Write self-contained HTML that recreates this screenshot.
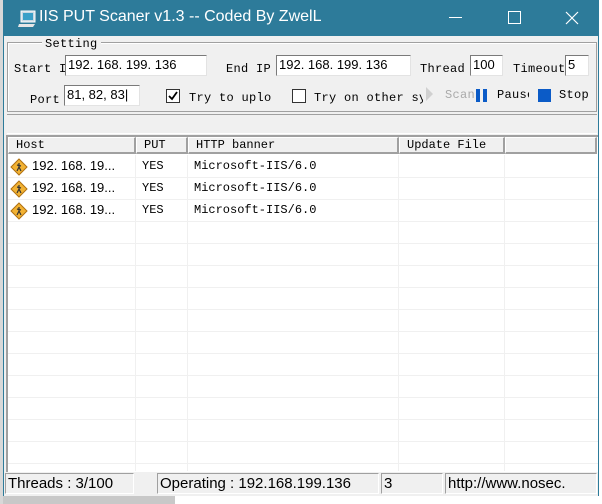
<!DOCTYPE html>
<html><head><meta charset="utf-8"><style>
*{margin:0;padding:0;box-sizing:border-box}
body{width:602px;height:504px;position:relative;overflow:hidden;background:#fff;font-family:"Liberation Mono",monospace;font-size:12px;color:#000}
.a{position:absolute}
.title{left:3px;top:0;width:596px;height:36px;background:#2d7b9a;color:#fff;font-family:"Liberation Sans",sans-serif;font-size:16px}
.win{left:3px;top:36px;width:596px;height:460px;background:#f0f0f0;border-right:1px solid #2d7b9a;border-left:1px solid #2d7b9a}
.inp{background:#fff;border-top:1px solid #7a7a7a;border-left:1px solid #7a7a7a;border-bottom:1px solid #e3e3e3;border-right:1px solid #e3e3e3;font-family:"Liberation Sans",sans-serif;font-size:13px;padding-left:2px;line-height:18px;height:21px}
.lbl{font-size:12px;line-height:14px;letter-spacing:0.3px}
.hd{top:137px;height:17px;background:#f0f0f0;border-right:2px solid #a0a0a0;border-bottom:2px solid #a0a0a0;border-left:1px solid #fff;border-top:1px solid #fff;font-size:12px;line-height:14px;padding-left:7px}
.cell{font-size:12px;line-height:22px}
.sb{top:473px;height:21px;border-top:1px solid #a0a0a0;border-left:1px solid #a0a0a0;border-bottom:1px solid #fff;border-right:1px solid #fff;font-family:"Liberation Sans",sans-serif;font-size:15px;line-height:19px;padding-left:2px;white-space:nowrap;overflow:hidden}
</style></head><body>
<div class="a" style="left:0;top:0;width:3px;height:504px;background:#d8d8d8"></div>
<div class="a title">
 <svg class="a" style="left:15px;top:10px" width="20" height="18"><rect x="3" y="1" width="14" height="11" fill="#c9d9e3" stroke="#fff"/><rect x="5" y="3" width="10" height="7" fill="#3aa0c8"/><path d="M1 14h16l-2 3H0z" fill="#e6e6e6"/></svg>
 <div class="a" style="left:36px;top:8px">IIS PUT Scaner v1.3 -- Coded By ZwelL</div>
 <div class="a" style="left:446px;top:17px;width:13px;height:1px;background:#fff"></div>
 <div class="a" style="left:505px;top:11px;width:13px;height:13px;border:1px solid #fff"></div>
 <svg class="a" style="left:562px;top:11px" width="14" height="14"><path d="M1 1L13 13M13 1L1 13" stroke="#fff" stroke-width="1.2"/></svg>
</div>
<div class="a win"></div>
<div class="a" style="left:7px;top:42px;width:590px;height:70px;border:1px solid #a0a0a0;box-shadow:inset 1px 1px #fff"></div>
<div class="a lbl" style="left:42px;top:37px;background:#f0f0f0;padding:0 3px">Setting</div>
<div class="a lbl" style="left:14px;top:62px">Start I</div>
<div class="a inp" style="left:65px;top:55px;width:142px">192. 168. 199. 136</div>
<div class="a lbl" style="left:226px;top:62px">End IP</div>
<div class="a inp" style="left:276px;top:55px;width:135px">192. 168. 199. 136</div>
<div class="a lbl" style="left:420px;top:62px">Thread</div>
<div class="a inp" style="left:470px;top:55px;width:33px">100</div>
<div class="a lbl" style="left:513px;top:62px">Timeout</div>
<div class="a inp" style="left:565px;top:55px;width:24px">5</div>
<div class="a lbl" style="left:30px;top:93px">Port</div>
<div class="a inp" style="left:64px;top:85px;width:76px">81, 82, 83|</div>
<div class="a" style="left:166px;top:89px;width:14px;height:14px;background:#fff;border:1px solid #333"></div>
<svg class="a" style="left:168px;top:91px" width="10" height="10"><path d="M1 5l3 3 5-7" stroke="#000" stroke-width="1.8" fill="none"/></svg>
<div class="a lbl" style="left:189px;top:91px">Try to uplo</div>
<div class="a" style="left:292px;top:89px;width:14px;height:14px;background:#fff;border:1px solid #333"></div>
<div class="a lbl" style="left:314px;top:91px;width:109px;overflow:hidden;white-space:nowrap">Try on other sys</div>
<svg class="a" style="left:425px;top:86px" width="10" height="16"><path d="M1 1L8 8L1 15z" fill="#d0d0d0"/></svg>
<div class="a lbl" style="left:445px;top:88px;color:#aaa;width:30px;overflow:hidden">Scan</div>
<div class="a" style="left:476px;top:89px;width:4px;height:13px;background:#0b5bc7"></div>
<div class="a" style="left:483px;top:89px;width:4px;height:13px;background:#0b5bc7"></div>
<div class="a lbl" style="left:497px;top:88px;width:32px;overflow:hidden">Pause</div>
<div class="a" style="left:538px;top:89px;width:13px;height:13px;background:#0b5bc7"></div>
<div class="a lbl" style="left:559px;top:88px">Stop</div>
<div class="a" style="left:7px;top:114px;width:590px;height:20px;border-top:1px solid #a0a0a0;border-bottom:1px solid #fff"></div>
<div class="a" style="left:6px;top:135px;width:592px;height:337px;background:#fff;border-top:2px solid #a0a0a0;border-left:2px solid #a0a0a0"></div>
<div class="a hd" style="left:8px;width:128px">Host</div>
<div class="a hd" style="left:136px;width:52px">PUT</div>
<div class="a hd" style="left:188px;width:211px">HTTP banner</div>
<div class="a hd" style="left:399px;width:106px">Update File</div>
<div class="a hd" style="left:505px;width:92px"></div>
<svg class="a" style="left:8px;top:155px" width="590" height="316">
<g stroke="#f0f0f0" stroke-width="1">
<path d="M0 22.5H590M0 44.5H590M0 66.5H590M0 88.5H590M0 110.5H590M0 132.5H590M0 154.5H590M0 176.5H590M0 198.5H590M0 220.5H590M0 242.5H590M0 264.5H590M0 286.5H590M0 308.5H590"/>
<path d="M127.5 0V316M179.5 0V316M390.5 0V316M496.5 0V316"/>
</g></svg>
<div class="a" style="left:7px;top:155px;width:590px">
 <div style="position:relative;height:22px"><svg class="a" style="left:3px;top:3px" width="18" height="18"><path d="M9 1L17 9L9 17L1 9z" fill="#f2b233" stroke="#b07010"/><path d="M9 5v4l-2 4M9 9l2 4M7 7l4 1" stroke="#333" stroke-width="1.2" fill="none"/></svg><span class="a cell" style="left:25px;font-family:'Liberation Sans',sans-serif;font-size:13px">192. 168. 19...</span><span class="a cell" style="left:135px">YES</span><span class="a cell" style="left:187px">Microsoft-IIS/6.0</span></div>
 <div style="position:relative;height:22px"><svg class="a" style="left:3px;top:3px" width="18" height="18"><path d="M9 1L17 9L9 17L1 9z" fill="#f2b233" stroke="#b07010"/><path d="M9 5v4l-2 4M9 9l2 4M7 7l4 1" stroke="#333" stroke-width="1.2" fill="none"/></svg><span class="a cell" style="left:25px;font-family:'Liberation Sans',sans-serif;font-size:13px">192. 168. 19...</span><span class="a cell" style="left:135px">YES</span><span class="a cell" style="left:187px">Microsoft-IIS/6.0</span></div>
 <div style="position:relative;height:22px"><svg class="a" style="left:3px;top:3px" width="18" height="18"><path d="M9 1L17 9L9 17L1 9z" fill="#f2b233" stroke="#b07010"/><path d="M9 5v4l-2 4M9 9l2 4M7 7l4 1" stroke="#333" stroke-width="1.2" fill="none"/></svg><span class="a cell" style="left:25px;font-family:'Liberation Sans',sans-serif;font-size:13px">192. 168. 19...</span><span class="a cell" style="left:135px">YES</span><span class="a cell" style="left:187px">Microsoft-IIS/6.0</span></div>
</div>
<div class="a sb" style="left:5px;width:129px">Threads : 3/100</div>
<div class="a sb" style="left:137px;width:192px;display:none"></div>
<div class="a sb" style="left:157px;width:222px">Operating : 192.168.199.136</div>
<div class="a sb" style="left:381px;width:62px">3</div>
<div class="a sb" style="left:445px;width:152px">http://www.nosec.</div>
<div class="a" style="left:3px;top:496px;width:172px;height:8px;background:#c8c8c8"></div>
</body></html>
